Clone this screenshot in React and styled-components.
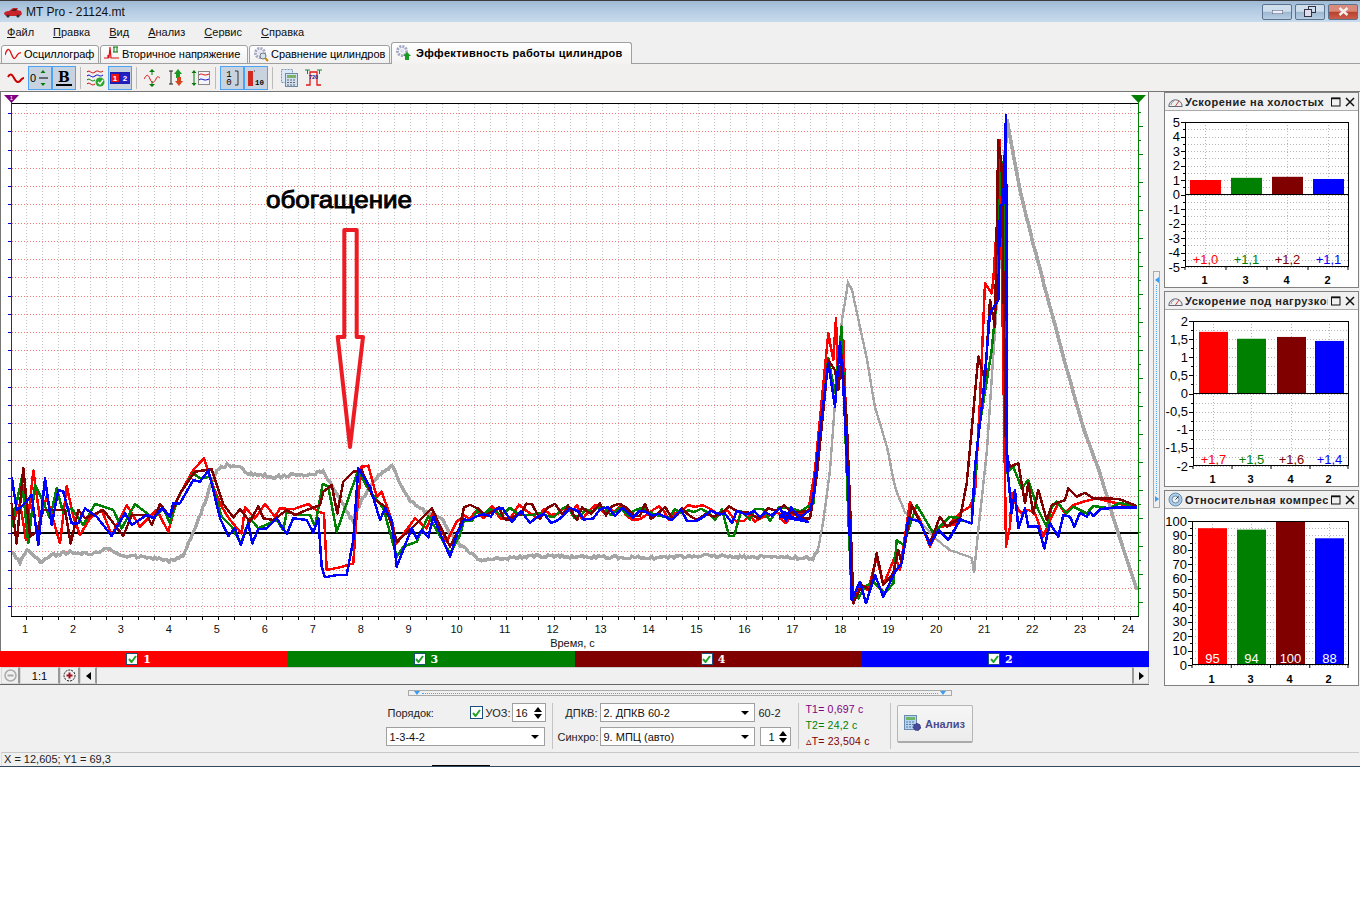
import React from 'react';
import styled, { createGlobalStyle } from 'styled-components';

const Global = createGlobalStyle`
  html, body { margin: 0; padding: 0; background: #fff; }
  body { font-family: "Liberation Sans", Arial, sans-serif; font-size: 11px; color: #000; }
  * { box-sizing: border-box; }
  svg { flex: none; }
`;
const UI = '"Liberation Sans", Arial, sans-serif';

const Win = styled.div`position:relative;width:1360px;height:767px;display:flex;flex-direction:column;background:#f0f0f0;border-bottom:1px solid #34495e;overflow:hidden;`;
const EdgeMark = styled.div`position:absolute;left:432px;bottom:0;width:58px;height:1px;background:#000;`;
const TitleBar = styled.div`height:22px;flex:none;display:flex;align-items:center;border-top:1px solid #3c3c3c;background:linear-gradient(#9fbad6,#b4cbe2 45%,#c8dbec);padding:0 2px 0 3px;`;
const Title = styled.span`font-size:12px;color:#111;margin-left:3px;flex:1;`;
const WinBtn = styled.div`width:30px;height:16px;margin-left:3px;border:1px solid #5c7390;border-radius:2px;display:flex;align-items:center;justify-content:center;background:${p=>p.$close?'linear-gradient(#d98a7a 45%,#b8402e 50%,#c9604c)':'linear-gradient(#cfdeed 45%,#9cb8d2 50%,#b7cde2)'};`;
const MenuBar = styled.div`height:21px;flex:none;display:flex;align-items:center;padding:0 0 2px 7px;gap:19px;background:#f0f0f0;`;
const MenuItem = styled.span`font-size:11px;color:#111;&::first-letter{text-decoration:underline;}`;
const TabBar = styled.div`height:21px;flex:none;display:flex;align-items:flex-end;padding-left:1px;gap:1px;border-bottom:1px solid #a0a0a0;background:#f0f0f0;`;
const Tab = styled.div`display:flex;align-items:center;gap:${p=>p.$gap}px;height:${p=>p.$active?'22px':'19px'};padding:0 ${p=>p.$active?'4px':'3px'} ${p=>p.$active?'2px':'1px'} 3px;margin-bottom:-1px;border:1px solid #a0a0a0;border-bottom:${p=>p.$active?'none':'1px solid #a0a0a0'};border-radius:3px 3px 0 0;background:${p=>p.$active?'linear-gradient(#fff,#f3f2f0)':'linear-gradient(#fff,#f0f0f0)'};font-size:11px;font-weight:${p=>p.$active?'700':'400'};letter-spacing:${p=>p.$active?'.32px':'-.05px'};width:${p=>p.$w}px;flex:none;white-space:nowrap;position:relative;z-index:${p=>p.$active?1:0};`;
const Toolbar = styled.div`height:28px;flex:none;display:flex;align-items:center;padding-left:4px;background:#f1f0ef;border-bottom:1px solid #777;`;
const ToolBtn = styled.div`width:24px;height:24px;flex:none;display:flex;align-items:center;justify-content:center;${p=>p.$on?'background:#c9d3e0;border:1px solid #4ba3f5;':''}`;
const ToolSep = styled.div`width:1px;height:22px;background:#bbb;margin:0 ${p=>p.$r}px 0 ${p=>p.$l}px;flex:none;`;
const Main = styled.div`height:594px;flex:none;display:flex;`;
const Left = styled.div`width:1149px;flex:none;display:flex;flex-direction:column;`;
const ChartPanel = styled.div`height:559px;flex:none;border-left:1px solid #777;border-right:1px solid #777;background:#fff;`;
const Strip = styled.div`height:16px;flex:none;display:flex;`;
const StripCell = styled.div`flex:1;background:${p=>p.$c};display:flex;align-items:center;justify-content:center;gap:5px;padding-right:10px;color:#fff;font:bold 11px "DejaVu Serif",serif;`;
const Check = styled.span`width:${p=>p.$s||12}px;height:${p=>p.$s||12}px;flex:none;background:#fff;border:1px solid #1d4f7c;display:inline-flex;align-items:center;justify-content:center;`;
const ScrollRow = styled.div`height:18px;flex:none;display:flex;border-bottom:1px solid #666;padding-left:1px;background:#f0f0f0;`;
const ScrollBtn = styled.div`width:${p=>p.$w}px;flex:none;display:flex;align-items:center;justify-content:center;font-size:11px;border:1px solid #d8d8d8;border-right:2px solid #999;`;
const ScrollEnd = styled(ScrollBtn)`border-left:2px solid #999;border-right:1px solid #bbb;`;
const ScrollTrack = styled.div`flex:1;border-top:1px solid #ccc;`;
const VSplit = styled.div`width:15px;flex:none;display:flex;align-items:center;padding-left:4px;`;
const VHandle = styled.div`width:7px;height:237px;border:1px solid #aaa;display:flex;flex-direction:column;align-items:center;justify-content:space-between;padding:5px 0;background:#f0f0f0;`;
const Right = styled.div`width:195px;flex:none;display:flex;flex-direction:column;gap:3px;`;
const Panel = styled.div`height:196px;flex:none;border:1px solid #808080;background:#fff;display:flex;flex-direction:column;overflow:hidden;`;
const PanelHead = styled.div`height:18px;flex:none;display:flex;align-items:center;padding-left:3px;background:#f0f0f0;border-bottom:1px solid #aaa;`;
const PanelTitle = styled.span`flex:1;min-width:0;overflow:hidden;white-space:nowrap;font-size:11px;font-weight:700;letter-spacing:.52px;color:#222;margin-left:2px;`;
const PanelBtns = styled.span`display:flex;align-items:center;gap:4px;margin:0 3px 0 3px;flex:none;`;
const Bottom = styled.div`height:66px;flex:none;display:flex;flex-direction:column;align-items:center;background:#f0f0f0;padding-top:4px;`;
const HHandle = styled.div`width:544px;height:6px;flex:none;border:1px solid #aaa;display:flex;align-items:center;justify-content:space-between;padding:0 5px;`;
const Dots = styled.div`flex:1;height:0;border-top:1px dotted #4ba3f5;margin:0 2px;`;
const VDots = styled.div`flex:1;width:0;border-left:1px dotted #4ba3f5;margin:2px 0;`;
const Controls = styled.div`display:flex;align-items:stretch;margin:7px 2px 0 0;height:44px;`;
const Group = styled.div`display:grid;row-gap:5px;grid-template-rows:19px 19px;align-items:center;${p=>p.$cols?`grid-template-columns:${p.$cols};column-gap:2px;`:''}`;
const Sep = styled.div`width:1px;background:#c4c4c4;margin:0 ${p=>p.$after}px 0 ${p=>p.$before}px;height:46px;flex:none;`;
const Row = styled.div`display:flex;align-items:center;height:19px;width:160px;`;
const Label = styled.span`font-size:11px;color:#222;white-space:nowrap;margin-left:${p=>p.$ml||0}px;margin-right:${p=>p.$mr||0}px;${p=>p.$grow?'flex:1;':''}${p=>p.$right?'text-align:right;':''}`;
const Box = styled.div`height:19px;width:${p=>p.$w}px;background:#fff;border:1px solid #a0a0a0;display:flex;align-items:center;font-size:11px;padding-left:${p=>p.$pl||3}px;margin-left:${p=>p.$ml||0}px;flex:none;color:#111;`;
const Grow = styled.span`flex:1;white-space:nowrap;`;
const Arrow = styled.span`width:0;height:0;border-left:4px solid transparent;border-right:4px solid transparent;border-top:4px solid #000;margin-right:5px;`;
const SpinArrows = styled.span`display:flex;flex-direction:column;gap:2px;margin-right:3px;`;
const Up = styled.span`width:0;height:0;border-left:4px solid transparent;border-right:4px solid transparent;border-bottom:5px solid #000;`;
const Down = styled.span`width:0;height:0;border-left:4px solid transparent;border-right:4px solid transparent;border-top:5px solid #000;`;
const TimeCol = styled.div`display:flex;flex-direction:column;justify-content:space-between;height:44px;width:84px;`;
const TimeLine = styled.span`font-size:10.5px;color:${p=>p.$c};white-space:nowrap;letter-spacing:.2px;`;
const AnalyzeBtn = styled.div`width:76px;height:38px;margin-top:2px;border:1px solid #b5b5b5;border-bottom:2px solid #aaa;border-radius:2px;background:linear-gradient(#f6f6f6,#ececec);display:flex;align-items:center;justify-content:center;gap:3px;font-size:11px;font-weight:700;color:#4a4a8c;`;
const Status = styled.div`height:15px;flex:none;display:flex;align-items:center;border-top:1px solid #c8c8c8;border-left:1px solid #ddd;margin:0 1px;padding:0 0 2px 2px;font-size:11px;color:#222;`;

/* ---- chart data, in zoomed-crop coordinates ---- */
const z8 = a => { const o=[]; for(let i=0;i<a.length;i+=2) o.push([a[i]/3,430+a[i+1]/3]); return o; };
const z9 = a => { const o=[]; for(let i=0;i<a.length;i+=2) o.push([780+a[i]/3,270+a[i+1]/3]); return o; };
const z10 = a => { const o=[]; for(let i=0;i<a.length;i+=2) o.push([950+a[i]/3,100+a[i+1]/3]); return o; };
function rng(seed){ let s=seed; return ()=>{ s=(s*1103515245+12345)&0x7fffffff; return s/0x7fffffff; }; }
function mid(seed, off, extra){
  const r=rng(seed); const o=[];
  for(let x=464;x<=808;x+=5+Math.floor(r()*5)){
    let y=513+off+(r()-.5)*17;
    if(extra && x>extra[0]&&x<extra[1]) y=extra[2];
    o.push([x,y]);
  }
  return o;
}
const RED=[...z8([35,290,60,220,78,330,100,122,120,265,140,200,160,270,180,340,200,168,220,260,240,315,270,265,305,240,335,315,380,225,420,290,470,240,505,305,530,210,580,120,612,85,640,170,665,230,690,270,725,310,735,232,765,265,795,222,825,260,840,235,880,238,925,222,955,245,972,250,980,420,1020,412,1060,400,1070,250,1085,110,1105,107,1130,200,1145,185,1175,270,1190,340,1245,265,1280,295,1300,245,1340,335,1370,275]),...mid(11,0),...z9([0,745,18,760,38,728,85,725,105,600,145,190,160,270,168,145,175,360,190,210,210,800,220,1000,240,950,265,960,290,860,310,945,345,860,360,900,390,695,420,750,450,830,480,770,520,765,540,750]),...z10([0,1270,35,1235,60,1220,75,1180,90,900,105,550,125,580,130,540,145,310,150,120,168,1340,180,1280,185,1180,205,1230,215,1240,235,1230,255,1240,280,1310,300,1260,325,1210,345,1240,370,1215,400,1205,440,1195,500,1210,560,1222])];
const GREEN=[...z8([35,290,65,145,85,338,105,165,125,205,150,265,170,175,190,250,215,235,250,285,285,222,340,240,365,295,405,222,460,265,490,235,510,280,535,200,580,130,600,145,630,140,665,260,695,290,722,340,750,265,775,295,830,270,850,300,860,245,895,255,930,255,945,290,968,162,985,170,1010,305,1075,120,1100,170,1150,235,1190,380,1210,350,1250,335,1285,258,1350,370,1380,315]),...mid(27,1,[728,738,536]),...z9([0,735,60,725,100,700,145,265,165,370,185,170,205,740,215,980,235,985,255,950,280,935,315,970,340,940,350,810,370,825,410,705,460,790,510,740,540,745]),...z10([0,1250,65,1270,85,1000,125,750,140,600,150,200,165,180,168,1120,190,1100,215,1165,235,1140,265,1230,290,1280,305,1220,320,1205,350,1240,370,1220,410,1240,430,1218,480,1225,510,1208,560,1222])];
const DARK=[...z8([35,220,50,340,70,115,90,320,110,305,130,240,175,240,195,240,212,340,235,240,255,265,310,240,370,318,395,255,440,255,455,285,480,222,510,260,540,190,585,125,635,118,670,222,700,262,720,238,750,275,775,228,790,265,820,270,860,240,885,255,920,240,960,225,970,185,995,165,1012,250,1030,155,1060,125,1085,120,1120,205,1155,230,1180,300,1190,335,1240,290,1295,235,1350,350,1380,290]),...mid(53,-1),...z9([0,735,45,745,90,745,110,620,145,270,165,300,175,360,185,255,200,450,210,700,220,1000,245,945,270,960,290,850,310,945,340,910,355,840,365,880,395,705,450,820,480,740,500,770,540,745]),...z10([0,1270,30,1255,50,1150,65,990,85,770,105,840,120,600,135,680,145,120,155,200,168,1060,180,1100,205,1090,225,1210,235,1150,250,1240,265,1170,290,1260,305,1215,345,1200,355,1165,380,1190,405,1178,430,1195,470,1195,510,1198,560,1218])];
const BLUE=[...z8([35,140,50,240,70,225,95,195,115,345,135,145,155,285,175,180,190,185,215,280,235,280,255,235,290,260,335,318,375,250,395,285,440,255,460,265,485,235,510,260,520,220,540,220,580,150,600,155,625,122,640,180,660,265,685,318,705,295,722,345,745,280,757,340,775,298,800,295,830,265,860,312,880,265,920,270,940,308,955,265,965,410,975,442,1010,435,1040,435,1060,330,1075,115,1110,170,1140,270,1155,235,1175,270,1190,410,1235,295,1250,325,1265,300,1285,322,1300,260,1350,380,1370,315]),...mid(91,2),...z9([0,740,12,725,50,750,90,720,100,680,120,480,145,280,165,410,180,215,190,350,205,650,215,990,240,935,258,1000,285,915,310,980,345,905,365,880,385,745,420,755,450,825,475,780,505,810,540,750]),...z10([0,1315,30,1258,65,1270,75,1100,100,880,120,640,145,600,150,320,160,310,168,45,172,1100,185,1240,195,1170,205,1285,225,1225,235,1280,265,1280,283,1345,300,1270,325,1310,340,1245,360,1250,373,1280,390,1238,410,1250,420,1235,430,1248,450,1228,500,1222,560,1222])];

function jitter(pts, step, amp, seed){
  const r=rng(seed), o=[];
  for(let i=0;i<pts.length-1;i++){
    const [x0,y0]=pts[i],[x1,y1]=pts[i+1];
    const n=Math.max(1,Math.round(Math.abs(x1-x0)/step));
    for(let k=0;k<n;k++){ const t=k/n; o.push([x0+(x1-x0)*t,y0+(y1-y0)*t+(r()-.5)*amp]); }
  }
  o.push(pts[pts.length-1]);
  return o;
}
const G1=[[12,552],[20,562],[27,550],[42,563],[50,556],[70,552],[90,554],[108,549],[125,556],[147,557],[173,561],[183,555],[193,533],[203,508],[210,487],[217,470],[227,465],[240,468],[247,473],[273,477],[300,475],[323,472],[328,480],[337,493],[350,518],[353,520],[363,498],[377,477],[392,466],[400,483],[410,500],[427,513],[443,520],[450,533],[460,545],[480,560]];
const G2=[[480,560],[540,556],[600,557],[660,558],[700,556],[760,557],[813,558],[818,550]];
const G3=[[818,550],[823,523],[830,470],[835,403],[842,320],[848,283],[852,290],[857,313],[867,360],[875,407],[887,447],[895,487],[905,513],[920,522],[937,540],[950,550],[972,558],[974,573],[978,533],[987,450],[997,300]];
const G4=[[997,300],[1007,120],[1010,137],[1020,190],[1033,243],[1050,307],[1067,370],[1083,427],[1100,473],[1113,517],[1127,560],[1137,590]];
const toStr=p=>p.map(([x,y])=>`${x.toFixed(1)},${y.toFixed(1)}`).join(' ');

function range(a,b,s){ const o=[]; for(let v=a;v<=b+1e-6;v+=s) o.push(v); return o; }

function MainChart(){
  const hy=range(-4,23,1).map(n=>533-n*18.26);
  const vx=range(26,1138,16);
  return (
    <svg width="1147" height="559" viewBox="1 92 1147 559" style={{display:'block'}}>
      <line x1="11" y1="103.5" x2="1139" y2="103.5" stroke="#000"/>
      {vx.map(x=><line key={x} x1={x+.5} y1="104" x2={x+.5} y2="616" stroke="#c4c4c4" strokeDasharray="1 2"/>)}
      {hy.map(y=><line key={y} x1="12" y1={Math.round(y)+.5} x2="1138" y2={Math.round(y)+.5} stroke="#ff7070" strokeDasharray="1 2"/>)}
      <line x1="12" y1="533" x2="1138" y2="533" stroke="#000" strokeWidth="2"/>
      <g fill="none" stroke="#a6a6a6" shapeRendering="crispEdges">
        <polyline points={toStr(jitter(G1,2,3,5))} strokeWidth="3.4"/>
        <polyline points={toStr(jitter(G2,2,3,6))} strokeWidth="3.4"/>
        <polyline points={toStr(jitter(G3,3,1,7))} strokeWidth="2.4"/>
        <polyline points={toStr(jitter(G4,3,1.5,8))} strokeWidth="3.6"/>
      </g>
      <g fill="none" strokeWidth="2.5" shapeRendering="crispEdges" strokeLinejoin="round">
        <polyline points={toStr(RED)} stroke="#ff0000"/>
        <polyline points={toStr(GREEN)} stroke="#008000"/>
        <polyline points={toStr(DARK)} stroke="#800000"/>
        <polyline points={toStr(BLUE)} stroke="#0000ff"/>
      </g>
      <line x1="11.5" y1="95" x2="11.5" y2="617" stroke="#800080"/>
      <line x1="1138.5" y1="100" x2="1138.5" y2="617" stroke="#008000"/>
      <line x1="11" y1="616.5" x2="1139" y2="616.5" stroke="#000"/>
      {hy.map(y=><line key={y} x1="8" y1={Math.round(y)+.5} x2="11" y2={Math.round(y)+.5} stroke="#0000c8"/>)}
      {range(112,604,14).map((y,i)=><line key={y} x1="1139" y1={y+.5} x2={i%2?1143:1141} y2={y+.5} stroke="#008000"/>)}
      {vx.map(x=><line key={x} x1={x+.5} y1="617" x2={x+.5} y2="620" stroke="#000"/>)}
      <polygon points="4,95 19,95 11.5,103" fill="#800080"/>
      <text x="11.5" y="100" fontSize="6" fill="#fff" textAnchor="middle" fontFamily={UI}>1</text>
      <polygon points="1131,95 1146,95 1138.5,103" fill="#008000"/>
      {range(1,24,1).map(n=><text key={n} x={25+(n-1)*47.96} y="633" fontSize="11" textAnchor="middle" fontFamily={UI} fill="#111">{n}</text>)}
      <text x="572.5" y="647" fontSize="11" textAnchor="middle" fontFamily={UI} fill="#111">Время, с</text>
      <text x="266" y="208" fontSize="24" fontFamily={UI} fontWeight="400" stroke="#000" strokeWidth=".9" textLength="146" lengthAdjust="spacingAndGlyphs">обогащение</text>
      <polygon points="344.3,230 356.7,230 356.7,337 363,337 350,447 337.7,337 344.3,337" fill="none" stroke="#ed1c24" strokeWidth="4" strokeLinejoin="round"/>
    </svg>
  );
}

function BarChart({ top, x0, x1, y0, y1, min, max, step, minor, fmt, bars, values, white, valueY, xLabelY }){
  const H=176, sy=v=>y0+(max-v)/(max-min)*(y1-y0);
  const ticks=range(min,max,step), minors=range(min,max,minor);
  const centers=bars.map(b=>(b[0]+b[1])/2);
  return (
    <svg width="193" height={H} viewBox={`1165 ${top} 193 ${H}`} style={{display:'block'}}>
      {centers.map(c=><line key={c} x1={c} x2={c} y1={y0} y2={y1} stroke="#b8b8b8" strokeDasharray="1 2"/>)}
      {minors.map(v=><line key={v} x1={x0} x2={x1} y1={Math.round(sy(v))+.5} y2={Math.round(sy(v))+.5} stroke="#b8b8b8" strokeDasharray="1 2"/>)}
      {bars.map((b,i)=>{ const yy=sy(b[2]), z=sy(Math.max(0,min)); return <rect key={i} x={b[0]} y={yy} width={b[1]-b[0]} height={z-yy} fill={b[3]}/>; })}
      <rect x={x0+.5} y={y0+.5} width={x1-x0-1} height={y1-y0-1} fill="none" stroke="#000"/>
      {min<0 && <line x1={x0} x2={x1} y1={sy(0)} y2={sy(0)} stroke="#000" strokeWidth="1"/>}
      {ticks.map(v=><line key={v} x1={x0-4} x2={x0} y1={Math.round(sy(v))+.5} y2={Math.round(sy(v))+.5} stroke="#000"/>)}
      {minors.map(v=><line key={v} x1={x0-2} x2={x0} y1={Math.round(sy(v))+.5} y2={Math.round(sy(v))+.5} stroke="#000"/>)}
      {ticks.map(v=><text key={v} x={x0-5} y={sy(v)+4.5} fontSize="13" textAnchor="end" fontFamily={UI}>{fmt(v)}</text>)}
      {centers.map((c,i)=><line key={c} x1={x0+(x1-x0)*i/4} x2={x0+(x1-x0)*i/4} y1={y1} y2={y1+3} stroke="#000"/>)}
      <line x1={x1-1} x2={x1-1} y1={y1} y2={y1+3} stroke="#000"/>
      {centers.map((c,i)=><text key={c} x={c} y={valueY} fontSize="13" textAnchor="middle" fontFamily={UI} fill={white?'#fff':bars[i][3]}>{values[i]}</text>)}
      {centers.map((c,i)=><text key={i} x={c-1} y={xLabelY} fontSize="11" fontWeight="700" textAnchor="middle" fontFamily={UI}>{['1','3','4','2'][i]}</text>)}
    </svg>
  );
}

/* ---- icons ---- */
const CheckMark=()=><svg width="9" height="8" viewBox="0 0 9 8"><path d="M1 4l2.5 3L8 1" fill="none" stroke="#22a32a" strokeWidth="2"/></svg>;
const Car=()=><svg width="20" height="12" viewBox="0 0 20 12"><path d="M1 8c0-2 2-3 5-3l4-3h5l-1 2 4 1 1 3-2 2H3z" fill="#c8232a"/><path d="M8 5l3-2h3l-1 2z" fill="#4a2020"/><circle cx="5" cy="10" r="1.6" fill="#333"/><circle cx="15" cy="10" r="1.6" fill="#333"/></svg>;
const WaveTab=()=><svg width="16" height="12" viewBox="0 0 16 12"><path d="M0 7c2-7 4-7 6-2s3 7 5 4 2-5 5-4" fill="none" stroke="#d11" strokeWidth="1.3"/></svg>;
const SecTab=()=><svg width="16" height="16" viewBox="0 0 16 16"><path d="M0 12h4v-3l1 3 1-11 1 11h8" fill="none" stroke="#d11" strokeWidth="1.2"/><path d="M9 1h5M10 1v5M13 1v5M9 6h5" stroke="#070" fill="none"/></svg>;
const Gear=({arrow})=><svg width="17" height="17" viewBox="0 0 17 17"><circle cx="7" cy="7" r="4.5" fill="none" stroke="#a4a8c4" strokeWidth="3" strokeDasharray="2 1"/><circle cx="7" cy="7" r="2" fill="#dde"/>{arrow?<path d="M12 8l4 4h-2v4h-4v-4H8z" fill="#1a9a22"/>:<><circle cx="10" cy="10" r="3" fill="#cfe4f5" stroke="#777"/><path d="M12 12l3 3" stroke="#c80" strokeWidth="2"/></>}</svg>;
const T={
  wave:<svg width="18" height="12" viewBox="0 0 18 12"><path d="M1 5c2-4 4-3 6 1s4 5 6 3 2-3 4-3" fill="none" stroke="#c00" strokeWidth="2"/></svg>,
  zero:<svg width="20" height="18" viewBox="0 0 20 18"><text x="0" y="13" fontSize="11" fontFamily={UI}>0</text><path d="M13 1l-2.5 3h5zM13 17l-2.5-3h5z" fill="#087a08"/><path d="M9 9h9" stroke="#000"/></svg>,
  bold:<svg width="20" height="18" viewBox="0 0 20 18"><text x="10" y="13" fontSize="14" fontWeight="700" textAnchor="middle" fontFamily='"DejaVu Serif",serif'>B</text><rect x="2" y="15" width="16" height="2"/></svg>,
  waves:<svg width="18" height="18" viewBox="0 0 18 18"><path d="M0 3c3-3 4 3 8 0s4 2 8-1" fill="none" stroke="#c00"/><path d="M0 7c3-3 4 3 8 0s4 2 8-1" fill="none" stroke="#00c"/><path d="M0 11c3-3 4 3 8 0" fill="none" stroke="#070"/><path d="M0 15c3-3 4 3 8 0" fill="none" stroke="#c00"/><circle cx="13" cy="13" r="4.5" fill="#2aa52e"/><path d="M11 13l2 2 3-4" fill="none" stroke="#fff" strokeWidth="1.4"/></svg>,
  oneTwo:<svg width="20" height="12" viewBox="0 0 20 12"><rect width="20" height="12" fill="#1e1eb4"/><rect x="1" y="2" width="8" height="8" fill="#e11"/><rect x="11" y="2" width="8" height="8" fill="#22c"/><text x="5" y="9" fontSize="8" fontWeight="700" fill="#fff" textAnchor="middle" fontFamily={UI}>1</text><text x="15" y="9" fontSize="8" fontWeight="700" fill="#fff" textAnchor="middle" fontFamily={UI}>2</text></svg>,
  ud:<svg width="16" height="18" viewBox="0 0 16 18"><path d="M8 0l-3 3h6zM8 18l-3-3h6z" fill="#087a08"/><path d="M8 3v3M8 12v3" stroke="#087a08"/><path d="M0 10c3-5 4-5 6 0s4 4 6 0 2-2 4-1" fill="none" stroke="#d11"/></svg>,
  ud2:<svg width="17" height="18" viewBox="0 0 17 18"><path d="M1 2h4M3 2v13M1 15h4" fill="none" stroke="#222"/><path d="M10 0l4 5h-2v4h-4v-4H6z" fill="#1a9a22"/><path d="M11 17l4-5h-2V8h-4v4H7z" fill="#d9461e"/></svg>,
  ud3:<svg width="19" height="18" viewBox="0 0 19 18"><path d="M3 1l-2.5 3h5zM3 17l-2.5-3h5z" fill="#087a08"/><path d="M3 4v10" stroke="#087a08"/><rect x="7.5" y="2.5" width="11" height="13" fill="#f4f4fa" stroke="#888"/><path d="M8 6c3-3 4 2 10-1" fill="none" stroke="#d11"/><path d="M8 11c3-3 4 2 10-1" fill="none" stroke="#11c"/></svg>,
  io:<svg width="18" height="18" viewBox="0 0 18 18"><text x="6" y="8" fontSize="9" textAnchor="middle" fontFamily="Liberation Mono">1</text><text x="6" y="16" fontSize="9" textAnchor="middle" fontFamily="Liberation Mono">0</text><path d="M12 2h3v14h-3" fill="none" stroke="#333"/></svg>,
  io10:<svg width="18" height="18" viewBox="0 0 18 18"><rect x="1" y="2" width="5" height="15" fill="#d02a22"/><path d="M7 2h1" stroke="#333"/><text x="12.5" y="16" fontSize="7.5" fontWeight="700" textAnchor="middle" fontFamily="Liberation Mono">10</text></svg>,
  calc:<svg width="17" height="18" viewBox="0 0 17 18"><rect x="0.5" y="0.5" width="11" height="13" fill="#dce8f5" stroke="#7a96b8" strokeDasharray="2 1"/><rect x="4.5" y="4.5" width="12" height="13" fill="#cfe0ee" stroke="#6f8aa5"/><rect x="6" y="6" width="9" height="3" fill="#7fb06a"/><path d="M6 11h9M6 13.5h9M6 16h9" stroke="#667" strokeDasharray="2 1"/></svg>,
  pulse:<svg width="17" height="18" viewBox="0 0 17 18"><path d="M1 16h4V3h7v13h4" fill="none" stroke="#e01818" strokeWidth="1.3"/><path d="M0 1h5M2.5 1v4M12 1h5M14.5 1v4" stroke="#0a8a30"/><text x="8.5" y="10" fontSize="5.5" fontWeight="700" fill="#22208a" textAnchor="middle" fontFamily={UI}>720</text></svg>,
};
const PanelIcon=({k})=> k==='g' ?
  <svg width="15" height="15" viewBox="0 0 15 15"><circle cx="7.5" cy="7.5" r="6.5" fill="#a9cdec" stroke="#6d8aa6"/><circle cx="7.5" cy="7.5" r="3.5" fill="#e6f2fb" stroke="#789"/><path d="M7.5 7.5l3-3" stroke="#334"/></svg> :
  <svg width="15" height="12" viewBox="0 0 15 12"><path d="M.8 10.5a6.7 6.7 0 1 1 13.4 0z" fill="#eee" stroke="#667"/><path d="M7.5 10L11 5" stroke="#c43"/><path d="M3 9a4.5 4.5 0 0 1 3-4" stroke="#99a" fill="none"/></svg>;
const MaxIcon=()=><svg width="10" height="10" viewBox="0 0 10 10"><rect x=".5" y="1" width="8.5" height="8" fill="none" stroke="#111"/><path d="M.5 1.5h8.5" stroke="#111" strokeWidth="1.5"/></svg>;
const CloseIcon=()=><svg width="10" height="10" viewBox="0 0 10 10"><path d="M1 1l8 8M9 1l-8 8" stroke="#111" strokeWidth="1.5"/></svg>;

const Ac=v=>v.toString().replace('.',',');
const PANELS=[
  {title:'Ускорение на холостых',icon:'s',top:111,x0:1185,x1:1349,y0:122,y1:267,min:-5,max:5,step:1,minor:.5,
   bars:[[1190,1221,1,'#ff0000'],[1231,1262,1.15,'#008000'],[1272,1303,1.22,'#800000'],[1313,1344,1.07,'#0000ff']],values:['+1,0','+1,1','+1,2','+1,1'],valueY:264,xLabelY:284},
  {title:'Ускорение под нагрузкой',icon:'s',top:310,x0:1193,x1:1349,y0:321,y1:466,min:-2,max:2,step:.5,minor:.25,
   bars:[[1199,1228,1.7,'#ff0000'],[1237,1266,1.51,'#008000'],[1277,1306,1.56,'#800000'],[1315,1344,1.45,'#0000ff']],values:['+1,7','+1,5','+1,6','+1,4'],valueY:464,xLabelY:483},
  {title:'Относительная компрессия',icon:'g',top:509,x0:1192,x1:1349,y0:521,y1:665,min:0,max:100,step:10,minor:5,
   bars:[[1198,1227,95,'#ff0000'],[1237,1266,94,'#008000'],[1276,1305,100,'#800000'],[1315,1344,88,'#0000ff']],values:['95','94','100','88'],white:true,valueY:663,xLabelY:683},
];

export default function App(){
  return (
    <Win>
      <Global/>
      <TitleBar>
        <Car/><Title>MT Pro - 21124.mt</Title>
        <WinBtn><svg width="11" height="4"><rect width="11" height="4" fill="#eef" stroke="#456"/></svg></WinBtn>
        <WinBtn><svg width="12" height="11" viewBox="0 0 12 11"><rect x="4.5" y=".5" width="7" height="6" fill="none" stroke="#334"/><rect x=".5" y="3.5" width="7" height="7" fill="#dde" stroke="#334"/></svg></WinBtn>
        <WinBtn $close><svg width="11" height="9" viewBox="0 0 11 9"><path d="M1.5 1l8 7M9.5 1l-8 7" stroke="#f5f0ee" strokeWidth="2.4"/></svg></WinBtn>
      </TitleBar>
      <MenuBar>
        {['Файл','Правка','Вид','Анализ','Сервис','Справка'].map(m=><MenuItem key={m}>{m}</MenuItem>)}
      </MenuBar>
      <TabBar>
        <Tab $w={98} $gap={3}><WaveTab/>Осциллограф</Tab>
        <Tab $w={148} $gap={2}><SecTab/>Вторичное напряжение</Tab>
        <Tab $w={141} $gap={1}><Gear/>Сравнение цилиндров</Tab>
        <Tab $w={241} $gap={4} $active><Gear arrow/>Эффективность работы цилиндров</Tab>
      </TabBar>
      <Toolbar>
        <ToolBtn>{T.wave}</ToolBtn>
        <ToolBtn $on>{T.zero}</ToolBtn><ToolBtn $on>{T.bold}</ToolBtn>
        <ToolSep $l={4} $r={3}/>
        <ToolBtn>{T.waves}</ToolBtn><ToolBtn $on>{T.oneTwo}</ToolBtn>
        <ToolSep $l={4} $r={3}/>
        <ToolBtn>{T.ud}</ToolBtn><ToolBtn>{T.ud2}</ToolBtn><ToolBtn>{T.ud3}</ToolBtn>
        <ToolSep $l={3} $r={4}/>
        <ToolBtn $on>{T.io}</ToolBtn><ToolBtn $on>{T.io10}</ToolBtn>
        <ToolSep $l={4} $r={4}/>
        <ToolBtn>{T.calc}</ToolBtn><ToolBtn>{T.pulse}</ToolBtn>
      </Toolbar>
      <Main>
        <Left>
          <ChartPanel><MainChart/></ChartPanel>
          <Strip>
            {[['#ff0000','1'],['#008000','3'],['#800000','4'],['#0000ff','2']].map(([c,n])=>
              <StripCell key={n} $c={c}><Check><CheckMark/></Check>{n}</StripCell>)}
          </Strip>
          <ScrollRow>
            <ScrollBtn $w={19}><svg width="13" height="13" viewBox="0 0 13 13"><circle cx="6.5" cy="6.5" r="5.5" fill="none" stroke="#aaa" strokeWidth="1.5"/><path d="M3.5 6.5h6" stroke="#aaa" strokeWidth="2"/></svg></ScrollBtn>
            <ScrollBtn $w={40}>1:1</ScrollBtn>
            <ScrollBtn $w={20}><svg width="13" height="13" viewBox="0 0 13 13"><circle cx="6.5" cy="6.5" r="5.5" fill="none" stroke="#111" strokeDasharray="2 1"/><path d="M3.5 6.5h6M6.5 3.5v6" stroke="#a01020" strokeWidth="2"/></svg></ScrollBtn>
            <ScrollBtn $w={17}><svg width="5" height="8"><path d="M5 0v8L0 4z"/></svg></ScrollBtn>
            <ScrollTrack/>
            <ScrollEnd $w={17}><svg width="5" height="8"><path d="M0 0v8l5-4z"/></svg></ScrollEnd>
          </ScrollRow>
        </Left>
        <VSplit>
          <VHandle>
            <svg width="4" height="6"><path d="M4 0v6L0 3z" fill="#3b9cf2"/></svg>
            <VDots/>
            <svg width="4" height="6"><path d="M0 0v6l4-3z" fill="#3b9cf2"/></svg>
          </VHandle>
        </VSplit>
        <Right>
          {PANELS.map(p=>(
            <Panel key={p.title}>
              <PanelHead>
                <PanelIcon k={p.icon}/><PanelTitle>{p.title}</PanelTitle>
                <PanelBtns><MaxIcon/><CloseIcon/></PanelBtns>
              </PanelHead>
              <BarChart {...p} fmt={Ac}/>
            </Panel>
          ))}
        </Right>
      </Main>
      <Bottom>
        <HHandle>
          <svg width="6" height="4"><path d="M0 0h6L3 4z" fill="#3b9cf2"/></svg>
          <Dots/>
          <svg width="6" height="4"><path d="M0 0h6L3 4z" fill="#3b9cf2"/></svg>
        </HHandle>
        <Controls>
          <Group>
            <Row>
              <Label $ml={2} $grow>Порядок:</Label>
              <Check $s={13}><CheckMark/></Check>
              <Label $ml={3} $mr={1}>УОЗ:</Label>
              <Box $w={34}><Grow>16</Grow><SpinArrows><Up/><Down/></SpinArrows></Box>
            </Row>
            <Box $w={159}><Grow>1-3-4-2</Grow><Arrow/></Box>
          </Group>
          <Sep $before={6} $after={5}/>
          <Group $cols="40px 155px auto">
            <Label $right>ДПКВ:</Label>
            <Box $w={155}><Grow>2. ДПКВ 60-2</Grow><Arrow/></Box>
            <Label $ml={2}>60-2</Label>
            <Label $right>Синхро:</Label>
            <Box $w={155}><Grow>9. МПЦ (авто)</Grow><Arrow/></Box>
            <Box $w={31} $ml={3} $pl={8}><Grow>1</Grow><SpinArrows><Up/><Down/></SpinArrows></Box>
          </Group>
          <Sep $before={7} $after={7}/>
          <TimeCol>
            <TimeLine $c="#800080">T1= 0,697 с</TimeLine>
            <TimeLine $c="#008000">T2= 24,2 с</TimeLine>
            <TimeLine $c="#800000">▵T= 23,504 с</TimeLine>
          </TimeCol>
          <Sep $before={0} $after={6}/>
          <AnalyzeBtn>
            <svg width="18" height="17" viewBox="0 0 18 17"><rect x=".5" y=".5" width="12" height="14" fill="#b6d4ee" stroke="#6a8ab0"/><rect x="2" y="2" width="9" height="3" fill="#6fb56a"/><path d="M2 7h9M2 9.5h9M2 12h9" stroke="#5577aa" strokeDasharray="2 1"/><circle cx="13" cy="12" r="3.5" fill="#4a4a9c" stroke="#33337a" strokeDasharray="2 1"/></svg>
            Анализ
          </AnalyzeBtn>
        </Controls>
      </Bottom>
      <Status>X = 12,605; Y1 = 69,3</Status>
      <EdgeMark/>
    </Win>
  );
}
